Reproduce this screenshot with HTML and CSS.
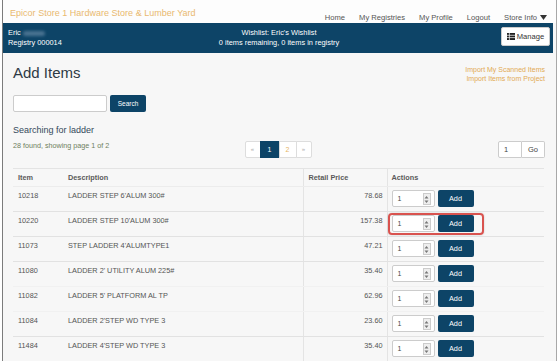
FILE: index.html
```html
<!DOCTYPE html>
<html>
<head>
<meta charset="utf-8">
<link rel="stylesheet" href="styles.css">
</head>
<body>
<div class="frame">
  <header class="topbar">
    <div class="brand">Epicor Store 1 Hardware Store &amp; Lumber Yard</div>
    <nav class="nav">
      <a>Home</a>
      <a>My Registries</a>
      <a>My Profile</a>
      <a>Logout</a>
      <a class="drop">Store Info <svg class="caret" width="7" height="5" viewBox="0 0 7 5"><path d="M0 0h7L3.5 5z" fill="#333"/></svg></a>
    </nav>
  </header>
  <div class="userbar">
    <div class="user">
      <div>Eric <span class="blur"></span></div>
      <div>Registry 000014</div>
    </div>
    <div class="wish">
      <div>Wishlist: Eric's Wishlist</div>
      <div>0 items remaining, 0 items in registry</div>
    </div>
    <button class="manage"><svg width="8" height="7" viewBox="0 0 8 7"><rect width="8" height="7" fill="#222"/><path d="M0 2.3h8M0 4.6h8M2.4 0v7" stroke="#fff" stroke-width="0.7"/></svg>Manage</button>
  </div>
  <main class="main">
    <div class="head-row">
      <h1 class="title">Add Items</h1>
      <div class="imports">
        <a>Import My Scanned Items</a>
        <a>Import Items from Project</a>
      </div>
    </div>
    <div class="search">
      <div class="search-input"></div>
      <button class="btn-search">Search</button>
    </div>
    <div class="searching">Searching for ladder</div>
    <div class="results-row">
      <div class="count">28 found, showing page 1 of 2</div>
      <div class="pager">
        <span class="pg muted">«</span>
        <span class="pg active">1</span>
        <span class="pg link">2</span>
        <span class="pg muted">»</span>
      </div>
      <div class="goto">
        <span class="go-input">1</span>
        <span class="go-btn">Go</span>
      </div>
    </div>
    <table class="items">
      <colgroup>
        <col class="c-item"><col class="c-desc"><col class="c-price"><col class="c-act">
      </colgroup>
      <thead>
        <tr><th>Item</th><th>Description</th><th class="bl">Retail Price</th><th class="bl">Actions</th></tr>
      </thead>
      <tbody>
        <tr><td>10218</td><td>LADDER STEP 6'ALUM 300#</td><td class="price bl">78.68</td><td class="bl"><div class="act"><span class="qty">1<span class="spin"><svg width="5" height="9" viewBox="0 0 5 9"><path d="M0.5 3.5L2.5 1l2 2.5zM0.5 5.5L2.5 8l2-2.5z" fill="#777"/></svg></span></span><button class="add">Add</button></div></td></tr>
        <tr><td>10220</td><td>LADDER STEP 10'ALUM 300#</td><td class="price bl">157.38</td><td class="bl"><div class="act hl"><span class="qty">1<span class="spin"><svg width="5" height="9" viewBox="0 0 5 9"><path d="M0.5 3.5L2.5 1l2 2.5zM0.5 5.5L2.5 8l2-2.5z" fill="#777"/></svg></span></span><button class="add">Add</button></div></td></tr>
        <tr><td>11073</td><td>STEP LADDER 4'ALUMTYPE1</td><td class="price bl">47.21</td><td class="bl"><div class="act"><span class="qty">1<span class="spin"><svg width="5" height="9" viewBox="0 0 5 9"><path d="M0.5 3.5L2.5 1l2 2.5zM0.5 5.5L2.5 8l2-2.5z" fill="#777"/></svg></span></span><button class="add">Add</button></div></td></tr>
        <tr class="faint"><td>11080</td><td>LADDER 2' UTILITY ALUM 225#</td><td class="price bl">35.40</td><td class="bl"><div class="act"><span class="qty">1<span class="spin"><svg width="5" height="9" viewBox="0 0 5 9"><path d="M0.5 3.5L2.5 1l2 2.5zM0.5 5.5L2.5 8l2-2.5z" fill="#777"/></svg></span></span><button class="add">Add</button></div></td></tr>
        <tr class="faint"><td>11082</td><td>LADDER 5' PLATFORM AL TP</td><td class="price bl">62.96</td><td class="bl"><div class="act"><span class="qty">1<span class="spin"><svg width="5" height="9" viewBox="0 0 5 9"><path d="M0.5 3.5L2.5 1l2 2.5zM0.5 5.5L2.5 8l2-2.5z" fill="#777"/></svg></span></span><button class="add">Add</button></div></td></tr>
        <tr><td>11084</td><td>LADDER 2'STEP WD TYPE 3</td><td class="price bl">23.60</td><td class="bl"><div class="act"><span class="qty">1<span class="spin"><svg width="5" height="9" viewBox="0 0 5 9"><path d="M0.5 3.5L2.5 1l2 2.5zM0.5 5.5L2.5 8l2-2.5z" fill="#777"/></svg></span></span><button class="add">Add</button></div></td></tr>
        <tr><td>11484</td><td>LADDER 4'STEP WD TYPE 3</td><td class="price bl">35.40</td><td class="bl"><div class="act"><span class="qty">1<span class="spin"><svg width="5" height="9" viewBox="0 0 5 9"><path d="M0.5 3.5L2.5 1l2 2.5zM0.5 5.5L2.5 8l2-2.5z" fill="#777"/></svg></span></span><button class="add">Add</button></div></td></tr>
      </tbody>
    </table>
  </main>
</div>
</body>
</html>
```
FILE: styles.css
```css
html, body {
  margin: 0;
  padding: 0;
  background: #fff;
}
body {
  font-family: "Liberation Sans", Arial, sans-serif;
  color: #444;
}
.frame {
  margin-left: 2px;
  width: 553px;
  height: 361px;
  overflow: hidden;
  border-left: 1px solid #7c7c7c;
  border-right: 1px solid #a8a8a8;
  background: #f7f7f7;
}
.topbar {
  height: 23px;
  background: #fdfdfd;
  display: flex;
  justify-content: space-between;
  align-items: flex-start;
  padding: 0 9px 0 7px;
}
.brand {
  font-size: 9px;
  color: #e9b96f;
  line-height: 12px;
  padding-top: 7px;
  letter-spacing: 0.02px;
}
.nav {
  display: flex;
  gap: 14px;
  font-size: 7.6px;
  color: #555;
  padding-top: 13px;
  line-height: 9px;
}
.nav a { display: flex; align-items: center; gap: 3px; }
.userbar {
  height: 30px;
  margin-right: 3px;
  background: #0d4467;
  color: #fff;
  display: grid;
  grid-template-columns: 1fr auto 1fr;
  align-items: start;
  font-size: 7.4px;
  line-height: 10px;
  padding: 0 3px 0 5px;
}
.user, .wish { padding-top: 5px; }
.wish { text-align: center; }
.blur {
  display: inline-block;
  width: 22px;
  height: 5px;
  background: #4a7391;
  border-radius: 3px;
  filter: blur(1.5px);
  vertical-align: middle;
}
.manage {
  justify-self: end;
  margin-top: 4px;
  width: 49px;
  height: 19px;
  background: #fff;
  border: 1px solid #ccc;
  border-radius: 2px;
  font-family: inherit;
  font-size: 7.6px;
  color: #333;
  display: flex;
  align-items: center;
  justify-content: center;
  gap: 2px;
  padding: 0;
}
.main {
  padding: 0 11px 0 10px;
}
.head-row {
  display: flex;
  justify-content: space-between;
  align-items: flex-start;
  padding-top: 11px;
}
.title {
  margin: 0;
  font-size: 15px;
  line-height: 18px;
  font-weight: normal;
  color: #2e3a44;
}
.imports {
  display: flex;
  flex-direction: column;
  align-items: flex-end;
  font-size: 7px;
  line-height: 9px;
  color: #e2aa55;
  padding-top: 1px;
}
.search {
  display: flex;
  gap: 3px;
  margin-top: 12px;
  height: 17px;
}
.search-input {
  width: 92px;
  height: 15px;
  background: #fff;
  border: 1px solid #ccc;
  border-radius: 2px;
}
.btn-search {
  width: 36px;
  height: 17px;
  background: #0d4467;
  border: 0;
  border-radius: 2px;
  color: #fff;
  font-family: inherit;
  font-size: 6.5px;
  padding: 0;
}
.searching {
  margin-top: 13px;
  font-size: 9px;
  line-height: 11px;
  color: #34495a;
}
.results-row {
  margin-top: 5px;
  display: grid;
  grid-template-columns: 1fr auto 1fr;
  align-items: start;
  height: 17px;
}
.count {
  font-size: 7.2px;
  line-height: 9px;
  color: #6e8060;
}
.pager {
  display: flex;
  transform: translateX(-1px);
}
.pg {
  height: 15px;
  border: 1px solid #ddd;
  background: #fff;
  font-size: 7px;
  line-height: 15px;
  text-align: center;
  margin-left: -1px;
}
.pg.muted { width: 14px; color: #aaa; font-size: 6px; }
.pg.active { width: 18px; background: #0d4467; border-color: #0d4467; color: #fff; }
.pg.link { width: 16px; color: #e6b565; }
.pg:first-child { border-radius: 2px 0 0 2px; margin-left: 0; }
.pg:last-child { border-radius: 0 2px 2px 0; }
.goto {
  justify-self: end;
  display: flex;
  font-size: 7.5px;
  color: #444;
}
.go-input {
  width: 17px;
  height: 15px;
  line-height: 15px;
  padding-left: 5px;
  background: #fff;
  border: 1px solid #ccc;
  border-radius: 2px 0 0 2px;
}
.go-btn {
  width: 22px;
  height: 15px;
  line-height: 15px;
  text-align: center;
  background: #fff;
  border: 1px solid #ccc;
  border-left: 0;
  border-radius: 0 2px 2px 0;
}
.items {
  margin-top: 10px;
  width: 531px;
  border-collapse: collapse;
  table-layout: fixed;
  font-size: 7.3px;
  color: #555;
}
.c-item { width: 50px; }
.c-desc { width: 240px; }
.c-price { width: 84px; }
.c-act { width: 157px; }
.items th {
  text-align: left;
  font-weight: bold;
  color: #5a5a5a;
  height: 17px;
  padding: 0 5px;
  line-height: 9px;
  border-top: 1px solid #e4e4e4;
  border-bottom: 1px solid #ececec;
}
.items td {
  height: 24px;
  padding: 4px 5px 0;
  vertical-align: top;
  line-height: 9px;
  border-bottom: 1px solid #e2e2e2;
  box-sizing: border-box;
}
.items tbody tr { height: 25px; }
.items tr.faint td { border-bottom-color: #f1f1f1; }
.items .bl { border-left: 1px solid #e4e4e4; }
.items td.price { text-align: right; padding-right: 4px; }
.items td.bl:last-child { padding: 3px 4px 0; }
.items th.bl:last-child { padding-left: 4px; }
.act {
  position: relative;
  display: flex;
  gap: 3px;
  width: 82px;
}
.hl::after {
  content: "";
  position: absolute;
  left: -4px;
  top: -2px;
  width: 92px;
  height: 18px;
  border: 2px solid #d9534f;
  border-radius: 4px;
  box-shadow: 0 0 2px rgba(0,0,0,0.2);
}
.qty {
  position: relative;
  width: 36px;
  height: 15px;
  padding-left: 5px;
  line-height: 15px;
  background: #fff;
  border: 1px solid #ccc;
  border-radius: 2px;
  font-size: 7px;
  color: #444;
}
.spin {
  position: absolute;
  right: 3px;
  top: 2px;
  width: 6px;
  height: 10px;
  border: 1px solid #ccc;
  background: #eee;
  display: flex;
  align-items: center;
  justify-content: center;
}
.add {
  width: 36px;
  height: 17px;
  background: #0d4467;
  color: #fff;
  border: 0;
  border-radius: 2px;
  font-family: inherit;
  font-size: 7.3px;
  padding: 0;
}
```
